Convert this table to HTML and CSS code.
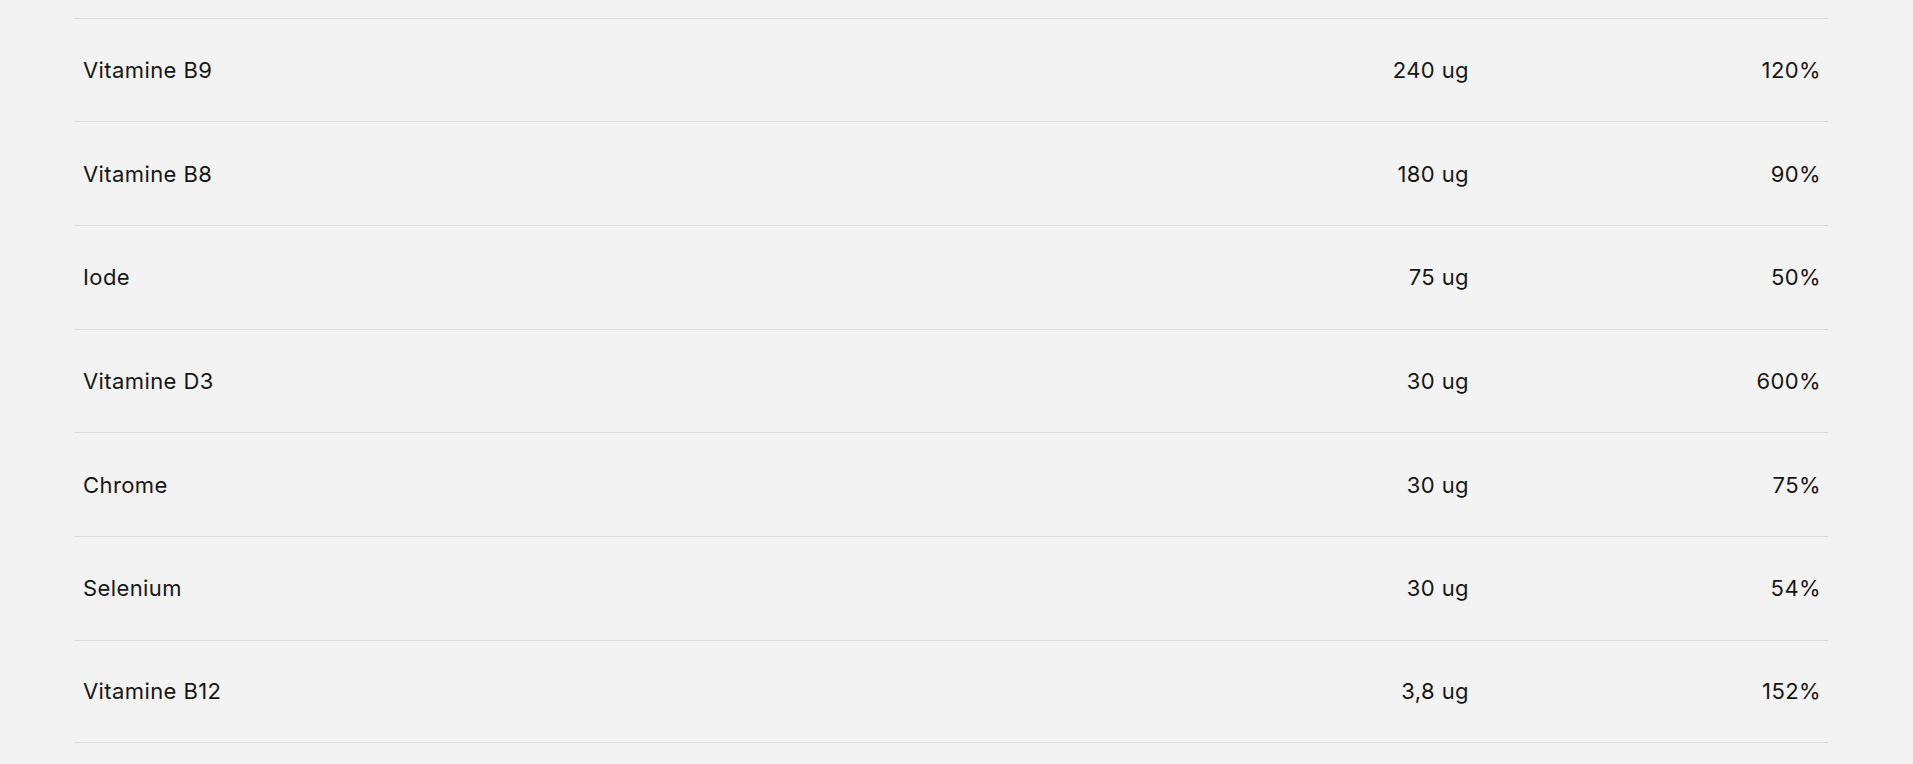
FILE: index.html
```html
<!DOCTYPE html>
<html>
	<head>
		<meta charset="UTF-8">
		<title>Valeurs nutritionnelles</title>
		<link rel="stylesheet" href="styles.css">
	</head>
	<body>
		<div class="nutri">
			<div class="row"><span class="name">Vitamine B9</span><span class="qty">240 ug</span><span class="pct">120%</span></div>
			<div class="row"><span class="name">Vitamine B8</span><span class="qty">180 ug</span><span class="pct">90%</span></div>
			<div class="row"><span class="name">Iode</span><span class="qty">75 ug</span><span class="pct">50%</span></div>
			<div class="row"><span class="name">Vitamine D3</span><span class="qty">30 ug</span><span class="pct">600%</span></div>
			<div class="row"><span class="name">Chrome</span><span class="qty">30 ug</span><span class="pct">75%</span></div>
			<div class="row"><span class="name">Selenium</span><span class="qty">30 ug</span><span class="pct">54%</span></div>
			<div class="row"><span class="name">Vitamine B12</span><span class="qty">3,8 ug</span><span class="pct">152%</span></div>
		</div>
	</body>
</html>
```

FILE: styles.css
```css
*{
	margin: 0;
	padding: 0;
	box-sizing: border-box;
}
body{
	background: #f3f3f3;
	color: #161616;
	font-family: "Inter", "Liberation Sans", sans-serif;
	font-size: 22px;
	letter-spacing: 0.4px;
	height: 764px;
	overflow: hidden;
}
.nutri{
	width: 1754px;
	margin-left: 74px;
	padding-top: 17.5px;
}
.row{
	display: grid;
	grid-template-columns: 1fr 200px 352px;
	align-items: center;
	height: 103.7px;
	border-top: 1px solid #dcdcdc;
	padding: 0 7px 0 9px;
}
.row:last-child{
	border-bottom: 1px solid #dcdcdc;
}
.qty{
	text-align: right;
}
.pct{
	text-align: right;
}
```
